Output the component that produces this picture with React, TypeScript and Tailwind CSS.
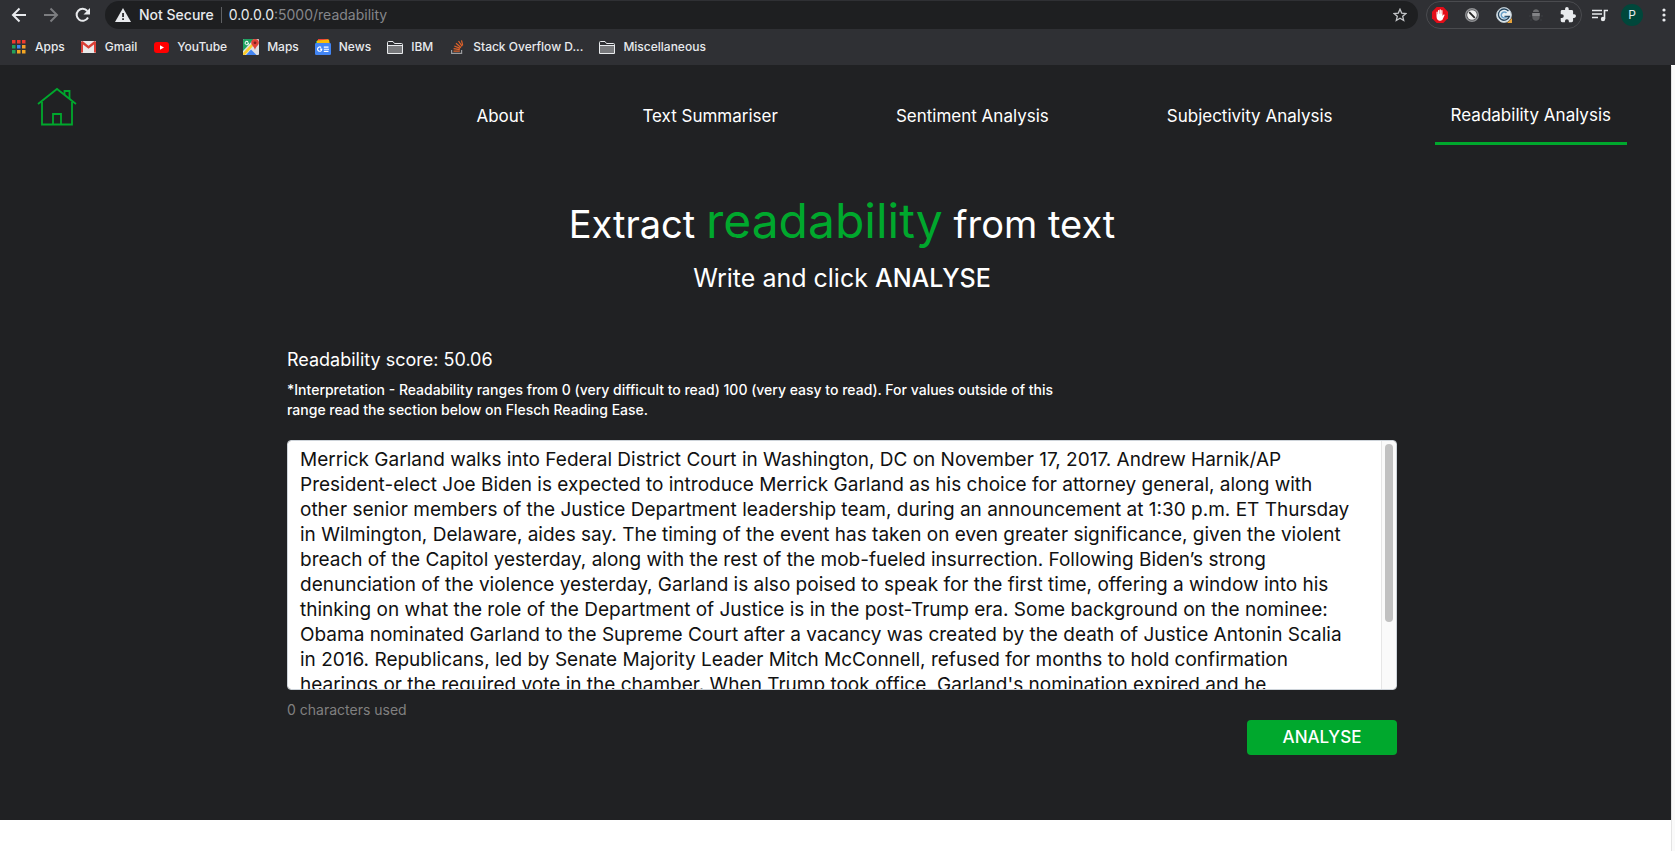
import React, { useState } from "react";

const article = [
  "Merrick Garland walks into Federal District Court in Washington, DC on November 17, 2017. Andrew Harnik/AP",
  "President-elect Joe Biden is expected to introduce Merrick Garland as his choice for attorney general, along with",
  "other senior members of the Justice Department leadership team, during an announcement at 1:30 p.m. ET Thursday",
  "in Wilmington, Delaware, aides say. The timing of the event has taken on even greater significance, given the violent",
  "breach of the Capitol yesterday, along with the rest of the mob-fueled insurrection. Following Biden’s strong",
  "denunciation of the violence yesterday, Garland is also poised to speak for the first time, offering a window into his",
  "thinking on what the role of the Department of Justice is in the post-Trump era. Some background on the nominee:",
  "Obama nominated Garland to the Supreme Court after a vacancy was created by the death of Justice Antonin Scalia",
  "in 2016. Republicans, led by Senate Majority Leader Mitch McConnell, refused for months to hold confirmation",
  "hearings or the required vote in the chamber. When Trump took office, Garland's nomination expired and he",
].join("\n");

function BackIcon() {
  return (
    <svg width="16" height="16" viewBox="0 0 16 16" fill="none" stroke="currentColor" strokeWidth="2">
      <path d="M15 8H2.5M8.500 1.500L2 8l6.500 6.500" />
    </svg>
  );
}

function ForwardIcon() {
  return (
    <svg width="16" height="16" viewBox="0 0 16 16" fill="none" stroke="currentColor" strokeWidth="2">
      <path d="M1 8h12.500M7.500 1.500L14 8l-6.500 6.500" />
    </svg>
  );
}

function ReloadIcon() {
  return (
    <svg width="16" height="16" viewBox="0 0 16 16">
      <path d="M13 10.500A6 6 0 1 1 12.300 4" fill="none" stroke="currentColor" strokeWidth="2" />
      <path d="M15 1v6.500H8.500z" fill="currentColor" />
    </svg>
  );
}

function WarningIcon() {
  return (
    <svg width="16" height="14" viewBox="0 0 16 14">
      <path d="M8 0l8 14H0z" fill="#e8eaed" />
      <path d="M7.200 5h1.700v4H7.200zM7.200 10.300h1.700V12H7.200z" fill="#1e1f21" />
    </svg>
  );
}

function AppsIcon() {
  const colors = ["#f03a2e", "#f03a2e", "#f03a2e", "#22a05a", "#3f86f5", "#f5a02b", "#22a05a", "#f5a623", "#f5a623"];
  return (
    <svg width="14" height="14" viewBox="0 0 14 14">
      {colors.map((c, i) => (
        <rect key={i} x={(i % 3) * 5} y={Math.floor(i / 3) * 5} width="3.500" height="3.500" fill={c} />
      ))}
    </svg>
  );
}

function GmailIcon() {
  return (
    <svg width="15" height="12" viewBox="0 0 15 12">
      <rect width="15" height="12" rx="1" fill="#e9e9e9" />
      <path d="M0 1v10.500h2V3.500l5.500 4.300L13 3.500v8h2V1L13.500 0 7.500 4.800 1.500 0z" fill="#d93f35" />
    </svg>
  );
}

function YouTubeIcon() {
  return (
    <svg width="15" height="11" viewBox="0 0 15 11">
      <rect width="15" height="11" rx="3" fill="#ff0000" />
      <path d="M6 3.200v4.600l4-2.300z" fill="#fff" />
    </svg>
  );
}

function MapsIcon() {
  return (
    <svg width="16" height="16" viewBox="0 0 16 16">
      <rect width="16" height="16" rx="1" fill="#dfe1e5" />
      <path d="M0 1a1 1 0 0 1 1-1h10L0 12z" fill="#1fa463" />
      <path d="M0 16v-2L8.500 5 10 7 2 16z" fill="#fbcd2c" />
      <path d="M3 16l5-5.500L13.500 16z" fill="#4285f4" />
      <path d="M5.800 3.500H4.200v1h.7a1.200 1.200 0 1 1-.3-1.300l.8-.7A2.100 2.100 0 1 0 6 4.200z" fill="#fff" />
      <path d="M12 0a3.800 3.800 0 0 0-3.800 3.800C8.200 6.500 11.200 7.500 12 11c.8-3.500 3.900-4.500 3.900-7.200A3.800 3.800 0 0 0 12 0z" fill="#e0443a" />
      <circle cx="12" cy="3.800" r="1.400" fill="#7d1f1b" />
    </svg>
  );
}

function NewsIcon() {
  return (
    <svg width="16" height="16" viewBox="0 0 16 16">
      <path d="M1 2h9v5H1z" fill="#34a853" />
      <path d="M3 0h10v5H3z" fill="#ea4335" />
      <path d="M2 1.500L14 .5 15 6H2z" fill="#fbbc04" />
      <rect y="4" width="16" height="12" rx="1.200" fill="#4285f4" />
      <path d="M7.300 9.500H5v1.200h1.100a1.500 1.500 0 1 1-.4-1.700l.8-.9A2.700 2.700 0 1 0 7.300 9.500z" fill="#fff" />
      <path d="M8.800 7.600h4.700v1.100H8.800zM8.800 9.700h5.200v1.100H8.800zM8.800 11.800h4.700v1.100H8.800z" fill="#fff" />
    </svg>
  );
}

function FolderIcon() {
  return (
    <svg width="16" height="13" viewBox="0 0 16 13">
      <path d="M.5 12.500v-11a1 1 0 0 1 1-1H6l1.500 2h7a1 1 0 0 1 1 1v9z" fill="#2f3034" />
      <path d="M1 4.500h14V12H1z" fill="#77787b" />
      <path d="M.5 12.500v-11a1 1 0 0 1 1-1H6l1.500 2h7a1 1 0 0 1 1 1v9zM.5 4.500h15" fill="none" stroke="#e8eaed" />
    </svg>
  );
}

function StackOverflowIcon() {
  return (
    <svg width="13" height="14" viewBox="0 0 13 14" fill="none">
      <path d="M.6 10v3.300h10V10" stroke="#9a9b9e" strokeWidth="1.200" />
      <path d="M2.500 11.200h6.300M2.600 8.700l6.200 1M3.300 6l5.900 2.400M5 3.300l5 4.200M7.500 1l3.600 5.300M10.500.3l1.200 5" stroke="#e0622a" strokeWidth="1.200" />
    </svg>
  );
}

function StarIcon() {
  return (
    <svg width="14" height="14" viewBox="0 0 14 14" fill="none" stroke="#c4c6c9" strokeWidth="1.300">
      <path d="M7 1.200l1.700 3.900 4.200.4-3.200 2.800 1 4.200L7 10.300l-3.700 2.200 1-4.200L1.100 5.500l4.200-.4z" />
    </svg>
  );
}

function BlockerIcon() {
  return (
    <svg width="16" height="16" viewBox="0 0 16 16">
      <path d="M4.700 0h6.600L16 4.700v6.600L11.300 16H4.700L0 11.300V4.700z" fill="#e40d18" />
      <path d="M4.500 8.500V5.200a.6.600 0 0 1 1.200 0v2h.3V3.600a.65.650 0 0 1 1.300 0v3.200h.3V2.900a.65.650 0 0 1 1.300 0v3.900h.3V3.600a.65.650 0 0 1 1.300 0V9l1.100-1.400c.5-.5 1.200 0 .9.600l-1.800 4.100c-.5 1-1.200 1.400-2.400 1.400-2.500 0-3.800-1.200-3.800-5.200z" fill="#fff" />
    </svg>
  );
}

function DisabledIcon() {
  return (
    <svg width="14" height="14" viewBox="0 0 14 14">
      <circle cx="7" cy="7" r="6.300" fill="#4a4b4f" stroke="#8f9093" strokeWidth="1.400" />
      <circle cx="7" cy="7" r="4.800" fill="#f1f1f1" />
      <path d="M4.200 4.200l5.600 5.600" stroke="#222" strokeWidth="1.800" />
    </svg>
  );
}

function SwirlIcon() {
  return (
    <svg width="16" height="16" viewBox="0 0 16 16">
      <circle cx="8" cy="8" r="7.400" fill="#e9f0f4" stroke="#b9c6ce" />
      <path d="M12.500 4.200a5.600 5.600 0 1 0 .8 5.300H8.500" fill="none" stroke="#27465f" strokeWidth="1.400" />
      <path d="M10.500 6A3 3 0 1 0 10.500 10" fill="none" stroke="#6aa0c8" strokeWidth="1.500" />
      <path d="M16 11v5h-5z" fill="#e6a23a" />
    </svg>
  );
}

function LanternIcon() {
  return (
    <svg width="14" height="14" viewBox="0 0 14 14">
      <path d="M4 4C4 .2 10 .2 10 4z" fill="#6b6c6f" />
      <path d="M3.300 5h7.400v4c0 5-7.400 5-7.400 0z" fill="#5b5c5f" />
      <path d="M3.300 5h7.400v3H3.300z" fill="#838487" />
      <path d="M0 8h2M12 8h2M1 12h2M11 12h2" stroke="#3d3e43" />
    </svg>
  );
}

function PuzzleIcon() {
  return (
    <svg width="16" height="16" viewBox="1 1 22 22" fill="#e8eaed">
      <path d="M20.500 11H19V7a2 2 0 0 0-2-2h-4V3.500a2.500 2.500 0 0 0-5 0V5H4a2 2 0 0 0-2 2v3.800h1.500a2.700 2.700 0 0 1 0 5.400H2V20a2 2 0 0 0 2 2h3.800v-1.500a2.700 2.700 0 0 1 5.400 0V22H17a2 2 0 0 0 2-2v-4h1.500a2.500 2.500 0 0 0 0-5z" />
    </svg>
  );
}

function PlaylistIcon() {
  return (
    <svg width="16" height="13" viewBox="0 0 16 13">
      <path d="M0 1.500h10M0 5h10M0 8.500h6" stroke="#e8eaed" strokeWidth="1.500" />
      <path d="M12.500 10V1.500H16" fill="none" stroke="#e8eaed" strokeWidth="1.600" />
      <circle cx="11" cy="10" r="2.200" fill="#e8eaed" />
    </svg>
  );
}

function MenuIcon() {
  return (
    <svg width="4" height="14" viewBox="0 0 4 14" fill="#e8eaed">
      <circle cx="2" cy="2" r="1.600" />
      <circle cx="2" cy="7" r="1.600" />
      <circle cx="2" cy="12" r="1.600" />
    </svg>
  );
}

function HouseIcon() {
  return (
    <svg width="40" height="40" viewBox="0 0 40 40" fill="none" stroke="#00a82d" strokeWidth="1.800">
      <path d="M1 17L20 2l19 15" />
      <path d="M5 15v22.500h30V15" />
      <path d="M16 37.500V27h8v10.500" />
      <path d="M27.500 8V4h5v8" />
    </svg>
  );
}

function Bookmark({ icon, label }: { icon: React.ReactNode; label: string }) {
  return (
    <a href="#" className="flex items-center gap-2 whitespace-nowrap">
      <span className="flex w-4 justify-center">{icon}</span>
      <span>{label}</span>
    </a>
  );
}

function BrowserChrome() {
  return (
    <header className="h-[65px] bg-[#2f3034] text-[#e8eaed]">
      <div className="flex h-[30px] items-center">
        <div className="flex w-[105px] shrink-0 items-center gap-4 pl-[11px]">
          <button aria-label="Back"><BackIcon /></button>
          <button aria-label="Forward" className="text-[#7c7d80]"><ForwardIcon /></button>
          <button aria-label="Reload"><ReloadIcon /></button>
        </div>
        <div className="flex h-7 flex-1 items-center rounded-full bg-[#1e1f21] pr-[11px] pl-[10px] text-sm">
          <WarningIcon />
          <span className="ml-2 font-medium">Not Secure</span>
          <span className="mx-[7px] h-4 w-px bg-[#5f6063]" />
          <span className="flex-1 text-[#85868a]">
            <span className="text-[#e8eaed]">0.0.0.0</span>:5000/readability
          </span>
          <button aria-label="Bookmark this page"><StarIcon /></button>
        </div>
        <div className="ml-2 flex h-7 w-[156px] items-center justify-between rounded-full border border-[#4a4b4f] px-[5px]">
          <button aria-label="Ad blocker"><BlockerIcon /></button>
          <button aria-label="Script blocker"><DisabledIcon /></button>
          <button aria-label="Page capture"><SwirlIcon /></button>
          <button aria-label="Lantern"><LanternIcon /></button>
          <button aria-label="Extensions"><PuzzleIcon /></button>
        </div>
        <div className="flex items-center pr-[9px] pl-[10px]">
          <button aria-label="Media controls"><PlaylistIcon /></button>
          <button aria-label="Profile" className="ml-[13px] h-[22px] w-[22px] rounded-full bg-[#00473b] text-xs">P</button>
          <button aria-label="Menu" className="ml-[19px]"><MenuIcon /></button>
        </div>
      </div>
      <nav aria-label="Bookmarks" className="flex h-[34px] items-center gap-4 pl-[11px] text-xs font-medium">
        <Bookmark icon={<AppsIcon />} label="Apps" />
        <Bookmark icon={<GmailIcon />} label="Gmail" />
        <Bookmark icon={<YouTubeIcon />} label="YouTube" />
        <Bookmark icon={<MapsIcon />} label="Maps" />
        <Bookmark icon={<NewsIcon />} label="News" />
        <Bookmark icon={<FolderIcon />} label="IBM" />
        <Bookmark icon={<StackOverflowIcon />} label="Stack Overflow D..." />
        <Bookmark icon={<FolderIcon />} label="Miscellaneous" />
      </nav>
    </header>
  );
}

const links = ["About", "Text Summariser", "Sentiment Analysis", "Subjectivity Analysis", "Readability Analysis"];

function SiteNav() {
  return (
    <div className="flex h-20 justify-between pr-11 pl-[37px]">
      <a href="#" aria-label="Home" className="pt-[22px]">
        <HouseIcon />
      </a>
      <nav className="flex gap-[86px] text-[17px] leading-6">
        {links.map((label) => (
          <a
            key={label}
            href="#"
            className={
              label === "Readability Analysis"
                ? "border-b-[3px] border-[#00a82d] px-4 pt-[38px]"
                : "border-b-[3px] border-transparent px-4 pt-[39px]"
            }
          >
            {label}
          </a>
        ))}
      </nav>
    </div>
  );
}

function TextEditor() {
  const [text, setText] = useState(article);
  const [progress, setProgress] = useState(0);
  return (
    <div className="relative mt-5">
      <textarea
        aria-label="Text to analyse"
        value={text}
        onChange={(e) => setText(e.target.value)}
        onScroll={(e) => {
          const el = e.currentTarget;
          setProgress(el.scrollTop / Math.max(1, el.scrollHeight - el.clientHeight));
        }}
        wrap="off"
        className="block h-[250px] w-full resize-none overflow-x-hidden overflow-y-scroll rounded border border-[#ced4da] bg-white pt-[6px] pr-7 pb-[92px] pl-3 text-[19px] leading-[25px] text-[#111111] [scrollbar-width:none]"
      />
      <div className="pointer-events-none absolute inset-y-px right-px w-[15px] rounded-r border-l border-[#e6e6e6] bg-[#fafafa]">
        <div
          className="absolute left-[3px] h-[178px] w-2 rounded-full bg-[#c1c1c1]"
          style={{ top: 3 + progress * 64 }}
        />
      </div>
    </div>
  );
}

export default function App() {
  return (
    <div className="flex min-h-screen flex-col bg-white font-['Inter','Liberation_Sans',sans-serif]">
      <BrowserChrome />
      <div className="flex flex-1">
        <div className="flex-1">
          <main className="bg-[#202123] pb-[65px] text-white">
            <SiteNav />
            <div className="pl-[13px]">
              <div className="mx-auto max-w-[1110px]">
                <h1 className="mt-[38px] text-center text-[38px] leading-[76px]">
                  Extract <span className="text-5xl leading-[76px] text-[#00a82d]">readability</span> from text
                </h1>
                <p className="text-center text-[25px] leading-8">
                  Write and click <span className="font-medium">ANALYSE</span>
                </p>
                <p className="mt-[52px] text-lg leading-7">Readability score: 50.06</p>
                <p className="mt-[6px] max-w-[832px] text-sm leading-5 font-medium">
                  *Interpretation - Readability ranges from 0 (very difficult to read) 100 (very easy to read). For values outside of this
                  <br />
                  range read the section below on Flesch Reading Ease.
                </p>
                <form onSubmit={(e) => e.preventDefault()}>
                  <TextEditor />
                  <p className="mt-[10px] text-sm leading-5 text-[#808080]">0 characters used</p>
                  <div className="flex justify-end">
                    <button type="submit" className="h-[35px] w-[150px] rounded bg-[#00a82d] text-[17px] font-medium">
                      ANALYSE
                    </button>
                  </div>
                </form>
              </div>
            </div>
          </main>
        </div>
        <div className="mt-px w-1 border-l border-[#e4e4e4] bg-[#fafafa]" />
      </div>
    </div>
  );
}
